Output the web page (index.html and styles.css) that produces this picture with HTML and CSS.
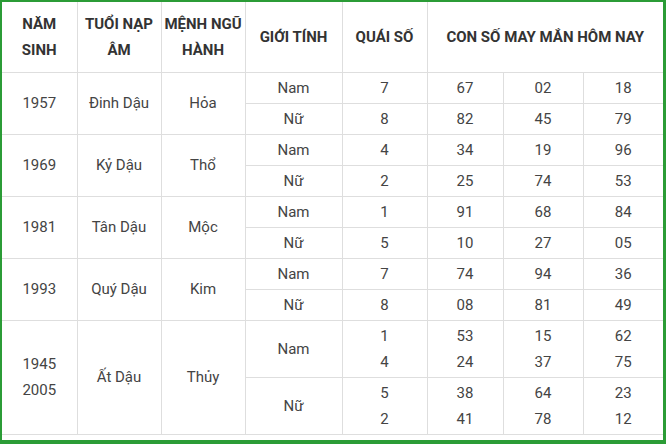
FILE: index.html
```html
<!DOCTYPE html>
<html lang="vi">
<head>
<meta charset="utf-8">
<link rel="stylesheet" href="styles.css">
</head>
<body>
<div class="frame">
<table class="lucky">
<colgroup>
<col class="c1"><col class="c2"><col class="c3"><col class="c4"><col class="c5"><col class="c6"><col class="c7"><col class="c8">
</colgroup>
<thead>
<tr class="head">
<th>NĂM<br>SINH</th>
<th>TUỔI NẠP<br>ÂM</th>
<th>MỆNH NGŨ<br>HÀNH</th>
<th>GIỚI TÍNH</th>
<th>QUÁI SỐ</th>
<th colspan="3">CON SỐ MAY MẮN HÔM NAY</th>
</tr>
</thead>
<tbody>
<tr class="r"><td rowspan="2">1957</td><td rowspan="2">Đinh Dậu</td><td rowspan="2">Hỏa</td><td>Nam</td><td>7</td><td>67</td><td>02</td><td>18</td></tr>
<tr class="r"><td>Nữ</td><td>8</td><td>82</td><td>45</td><td>79</td></tr>
<tr class="r"><td rowspan="2">1969</td><td rowspan="2">Kỷ Dậu</td><td rowspan="2">Thổ</td><td>Nam</td><td>4</td><td>34</td><td>19</td><td>96</td></tr>
<tr class="r"><td>Nữ</td><td>2</td><td>25</td><td>74</td><td>53</td></tr>
<tr class="r"><td rowspan="2">1981</td><td rowspan="2">Tân Dậu</td><td rowspan="2">Mộc</td><td>Nam</td><td>1</td><td>91</td><td>68</td><td>84</td></tr>
<tr class="r"><td>Nữ</td><td>5</td><td>10</td><td>27</td><td>05</td></tr>
<tr class="r"><td rowspan="2">1993</td><td rowspan="2">Quý Dậu</td><td rowspan="2">Kim</td><td>Nam</td><td>7</td><td>74</td><td>94</td><td>36</td></tr>
<tr class="r"><td>Nữ</td><td>8</td><td>08</td><td>81</td><td>49</td></tr>
<tr class="r2"><td rowspan="2">1945<br>2005</td><td rowspan="2">Ất Dậu</td><td rowspan="2">Thủy</td><td>Nam</td><td>1<br>4</td><td>53<br>24</td><td>15<br>37</td><td>62<br>75</td></tr>
<tr class="r2"><td>Nữ</td><td>5<br>2</td><td>38<br>41</td><td>64<br>78</td><td>23<br>12</td></tr>
</tbody>
</table>
</div>
</body>
</html>
```
FILE: styles.css
```css
html, body {
  margin: 0;
  padding: 0;
  background: #fff;
}
.frame {
  width: 661px;
  height: 438px;
  border-style: solid;
  border-color: #2b9c36;
  border-width: 2px 3px 4px 2px;
  background: #fff;
  overflow: hidden;
}
.lucky {
  border-collapse: collapse;
  table-layout: fixed;
  width: 661px;
  font-family: Roboto, "Liberation Sans", sans-serif;
  font-size: 15px;
  color: #444;
}
.c1 { width: 75px; }
.c2 { width: 84px; }
.c3 { width: 84px; }
.c4 { width: 97px; }
.c5 { width: 85px; }
.c6 { width: 76px; }
.c7 { width: 80px; }
.c8 { width: 80px; }
.lucky th, .lucky td {
  border: 1px solid #dedede;
  text-align: center;
  vertical-align: middle;
  padding: 0 2px;
  line-height: 26px;
}
.lucky th {
  font-weight: 700;
  color: #333;
}
.lucky tr:first-child th { border-top: none; }
.lucky th:first-child, .lucky td:first-child { border-left: none; }
.lucky tr > :last-child { border-right: none; }
.head { height: 70px; }
.r { height: 31px; }
.r2 { height: 57px; }
```
